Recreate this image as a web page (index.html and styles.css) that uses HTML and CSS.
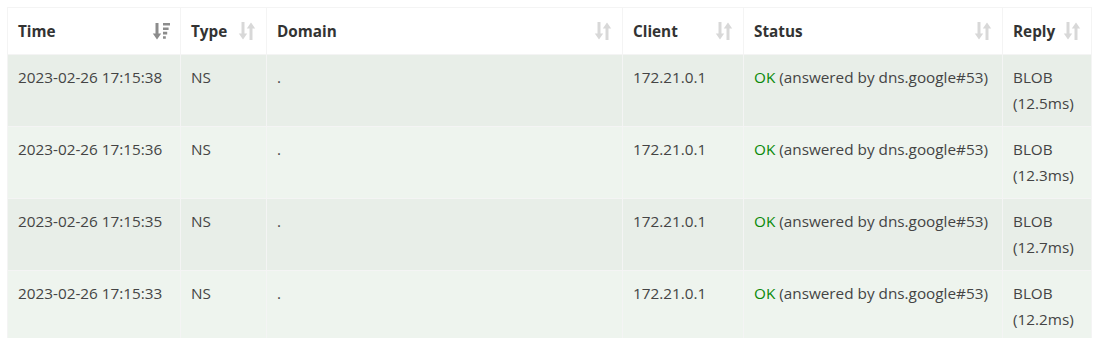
FILE: index.html
```html
<!DOCTYPE html>
<html>
<head>
<meta charset="utf-8">
<link rel="stylesheet" href="styles.css">
</head>
<body>
<div class="wrap">
<table class="log">
  <thead>
    <tr>
      <th class="c-time"><div class="th-in"><span>Time</span><svg class="sort active" viewBox="0 0 18 20"><path d="M5 2v12" stroke="currentColor" stroke-width="3"/><path d="M0.8 12.5h8.4l-4.2 6z" fill="currentColor"/><path d="M11 2h7v2.6h-7zM11 6.4h5.6v2.6h-5.6zM11 10.8h4.2v2.6h-4.2zM11 15.2h2.8v2.6h-2.8z" fill="currentColor"/></svg></div></th>
      <th class="c-type"><div class="th-in"><span>Type</span><svg class="sort" viewBox="0 0 18 20"><path d="M5 1v13" stroke="currentColor" stroke-width="3"/><path d="M0.8 12.5h8.4l-4.2 6z" fill="currentColor"/><path d="M13 6v13" stroke="currentColor" stroke-width="3"/><path d="M8.8 7.5h8.4l-4.2-6z" fill="currentColor"/></svg></div></th>
      <th class="c-domain"><div class="th-in"><span>Domain</span><svg class="sort" viewBox="0 0 18 20"><path d="M5 1v13" stroke="currentColor" stroke-width="3"/><path d="M0.8 12.5h8.4l-4.2 6z" fill="currentColor"/><path d="M13 6v13" stroke="currentColor" stroke-width="3"/><path d="M8.8 7.5h8.4l-4.2-6z" fill="currentColor"/></svg></div></th>
      <th class="c-client"><div class="th-in"><span>Client</span><svg class="sort" viewBox="0 0 18 20"><path d="M5 1v13" stroke="currentColor" stroke-width="3"/><path d="M0.8 12.5h8.4l-4.2 6z" fill="currentColor"/><path d="M13 6v13" stroke="currentColor" stroke-width="3"/><path d="M8.8 7.5h8.4l-4.2-6z" fill="currentColor"/></svg></div></th>
      <th class="c-status"><div class="th-in"><span>Status</span><svg class="sort" viewBox="0 0 18 20"><path d="M5 1v13" stroke="currentColor" stroke-width="3"/><path d="M0.8 12.5h8.4l-4.2 6z" fill="currentColor"/><path d="M13 6v13" stroke="currentColor" stroke-width="3"/><path d="M8.8 7.5h8.4l-4.2-6z" fill="currentColor"/></svg></div></th>
      <th class="c-reply"><div class="th-in"><span>Reply</span><svg class="sort" viewBox="0 0 18 20"><path d="M5 1v13" stroke="currentColor" stroke-width="3"/><path d="M0.8 12.5h8.4l-4.2 6z" fill="currentColor"/><path d="M13 6v13" stroke="currentColor" stroke-width="3"/><path d="M8.8 7.5h8.4l-4.2-6z" fill="currentColor"/></svg></div></th>
    </tr>
  </thead>
  <tbody>
    <tr class="odd">
      <td>2023-02-26 17:15:38</td><td>NS</td><td>.</td><td>172.21.0.1</td>
      <td><span class="ok">OK</span> (answered by dns.google#53)</td><td>BLOB<br>(12.5ms)</td>
    </tr>
    <tr class="even">
      <td>2023-02-26 17:15:36</td><td>NS</td><td>.</td><td>172.21.0.1</td>
      <td><span class="ok">OK</span> (answered by dns.google#53)</td><td>BLOB<br>(12.3ms)</td>
    </tr>
    <tr class="odd">
      <td>2023-02-26 17:15:35</td><td>NS</td><td>.</td><td>172.21.0.1</td>
      <td><span class="ok">OK</span> (answered by dns.google#53)</td><td>BLOB<br>(12.7ms)</td>
    </tr>
    <tr class="even">
      <td>2023-02-26 17:15:33</td><td>NS</td><td>.</td><td>172.21.0.1</td>
      <td><span class="ok">OK</span> (answered by dns.google#53)</td><td>BLOB<br>(12.2ms)</td>
    </tr>
  </tbody>
</table>
</div>
</body>
</html>
```

FILE: styles.css
```css
html, body {
  margin: 0;
  padding: 0;
  background: #ffffff;
}
.wrap {
  padding: 7px 7px 0 7px;
}
.log {
  width: 1084px;
  border-collapse: collapse;
  table-layout: fixed;
  font-family: "Open Sans", "Noto Sans", sans-serif;
  font-size: 15.3px;
  line-height: 26px;
  color: #333;
}
.log th, .log td {
  box-sizing: border-box;
  padding: 10px;
  text-align: left;
  vertical-align: top;
  border: 1px solid #f4f4f4;
  overflow: hidden;
}
.c-time { width: 173px; }
.c-type { width: 86px; }
.c-domain { width: 356px; }
.c-client { width: 121px; }
.c-status { width: 259px; }
.c-reply { width: 89px; }

.log th {
  font-weight: 700;
  color: #333;
  background: #fff;
}
.th-in {
  display: flex;
  align-items: center;
  justify-content: space-between;
  gap: 4px;
}
.sort {
  width: 18px;
  height: 20px;
  flex: none;
  color: #d8d8d8;
}
.sort.active {
  color: #8c8c8c;
}
.log td {
  color: #444;
  white-space: nowrap;
  padding-top: 9px;
}
.log tr.odd td { background: #e8eee8; }
.log tr.even td { background: #eef4ee; }
.log tbody td { height: 71px; }
.ok { color: #0a8a0a; }
```
